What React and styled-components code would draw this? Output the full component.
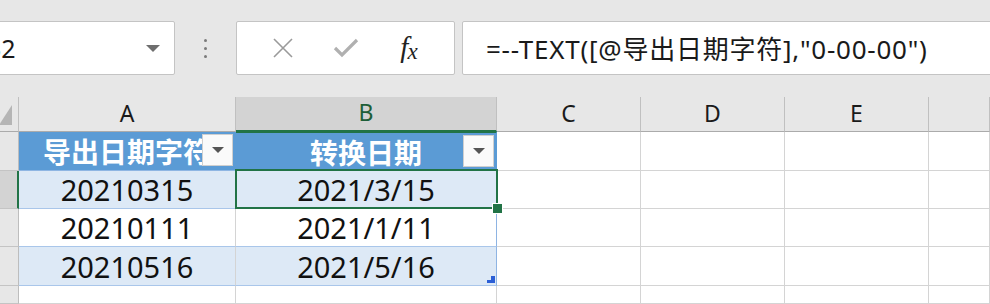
import React from 'react';
import styled, { createGlobalStyle, css } from 'styled-components';

const GREEN = '#217346';
const FONT = `"Noto Sans", "Noto Sans CJK SC", sans-serif`;

const Global = createGlobalStyle`
  html, body {
    margin: 0;
    padding: 0;
    background: #e7e7e7;
  }
  body {
    width: 990px;
    height: 304px;
    overflow: hidden;
    font-family: ${FONT};
  }
`;

const Page = styled.div`
  width: 990px;
  height: 304px;
  overflow: hidden;
  background: #e7e7e7;
  display: flex;
  flex-direction: column;
`;

const Toolbar = styled.div`
  height: 97px;
  box-sizing: border-box;
  padding-top: 21px;
  display: flex;
  align-items: flex-start;
`;

const Field = styled.div`
  height: 54px;
  box-sizing: border-box;
  background: #ffffff;
  border: 1px solid #c4c4c4;
  border-radius: 2px;
  display: flex;
  align-items: center;
`;

const NameBox = styled(Field)`
  margin-left: -25px;
  width: 200px;
  padding-left: 9px;
  padding-right: 14px;
  font-size: 25px;
  color: #1a1a1a;
  justify-content: space-between;
`;

const Caret = styled.span`
  width: 0;
  height: 0;
  border-left: 7px solid transparent;
  border-right: 7px solid transparent;
  border-top: 7px solid #6e6e6e;
`;

const Grip = styled.div`
  width: 61px;
  height: 54px;
  display: flex;
  flex-direction: column;
  align-items: center;
  justify-content: center;
  gap: 5px;
  span {
    width: 3px;
    height: 3px;
    border-radius: 50%;
    background: #7a7a7a;
  }
`;

const ButtonGroup = styled(Field)`
  width: 219px;
  justify-content: space-around;
  padding: 0 14px;
`;

const IconButton = styled.span`
  width: 40px;
  height: 40px;
  display: flex;
  align-items: center;
  justify-content: center;
`;

const Fx = styled.span`
  font-family: "Liberation Serif", "DejaVu Serif", serif;
  font-style: italic;
  color: #222;
  font-size: 29px;
  line-height: 1;
  letter-spacing: -1px;
  sub {
    font-size: 23px;
    vertical-align: -2px;
  }
`;

const FormulaInput = styled(Field)`
  margin-left: 7px;
  flex: 1;
  margin-right: -10px;
  padding-left: 23px;
  font-size: 26px;
  letter-spacing: 0.75px;
  color: #1a1a1a;
  white-space: nowrap;
`;

const Sheet = styled.div`
  flex: 1;
  display: grid;
  grid-template-columns: 19px 217px 261px 144px 144px 144px 1fr;
  grid-template-rows: 35px 39px 38px 38px 39px 1fr;
  background: #ffffff;
`;

const Cell = styled.div`
  position: relative;
  box-sizing: border-box;
  border-right: 1px solid #d4d4d4;
  border-bottom: 1px solid #d4d4d4;
  display: flex;
  align-items: center;
  justify-content: center;
  font-size: 29px;
  color: #111;
  white-space: nowrap;
  ${p => p.$band && css`
    background: #dde9f6;
  `}
  ${p => p.$tableRow && css`
    border-bottom-color: #a9c6ea;
  `}
  ${p => p.$tableEdge && css`
    border-right-color: #8eb4e3;
  `}
  ${p => p.$active && css`
    z-index: 2;
  `}
`;

const ColHead = styled.div`
  box-sizing: border-box;
  background: ${p => (p.$active ? '#d3d3d3' : '#e7e7e7')};
  border-right: 1px solid #c0c0c0;
  border-bottom: ${p => (p.$active ? `2px solid ${GREEN}` : '1px solid #ababab')};
  color: ${p => (p.$active ? '#1d5e37' : '#1a1a1a')};
  font-size: 23px;
  display: flex;
  align-items: flex-end;
  justify-content: center;
  padding-bottom: 2px;
`;

const Corner = styled.div`
  box-sizing: border-box;
  background: #e7e7e7;
  border-right: 1px solid #c0c0c0;
  border-bottom: 1px solid #ababab;
  display: flex;
  align-items: flex-end;
  justify-content: flex-end;
  padding: 0 6px 6px 0;
`;

const CornerMark = styled.span`
  width: 0;
  height: 0;
  border-left: 13px solid transparent;
  border-bottom: 20px solid #b5b5b5;
  margin-left: -13px;
`;

const RowHead = styled.div`
  box-sizing: border-box;
  background: ${p => (p.$active ? '#d3d3d3' : '#e7e7e7')};
  border-right: ${p => (p.$active ? `2px solid ${GREEN}` : '1px solid #bdbdbd')};
  border-bottom: 1px solid #c4c4c4;
`;

const HeaderCell = styled.div`
  position: relative;
  box-sizing: border-box;
  background: #5b9bd5;
  border-right: 1px solid #5b9bd5;
  border-bottom: 1px solid #8fb6e3;
  color: #ffffff;
  font-family: "Noto Sans CJK SC", sans-serif;
  font-weight: 700;
  font-size: 28px;
  display: flex;
  align-items: center;
  justify-content: center;
  white-space: nowrap;
  overflow: hidden;
  ${p => p.$active && css`
    border-top: 2px solid ${GREEN};
    margin-top: -1px;
  `}
`;

const FilterButton = styled.span`
  position: absolute;
  top: 2px;
  right: 2px;
  width: 31px;
  height: 32px;
  box-sizing: border-box;
  background: #fafafa;
  border: 1px solid #cfcfcf;
  display: flex;
  align-items: center;
  justify-content: center;
  &::after {
    content: '';
    border-left: 6px solid transparent;
    border-right: 6px solid transparent;
    border-top: 6px solid #555;
  }
`;

const Selection = styled.span`
  position: absolute;
  top: -2px;
  left: -1px;
  right: -2px;
  bottom: -1px;
  border: 2px solid ${GREEN};
  pointer-events: none;
`;

const FillHandle = styled.span`
  position: absolute;
  right: -7px;
  bottom: -6px;
  width: 11px;
  height: 11px;
  box-sizing: border-box;
  background: ${GREEN};
  border: 1px solid #ffffff;
  z-index: 3;
`;

const ResizeMark = styled.svg`
  position: absolute;
  right: 1px;
  bottom: 2px;
`;

const rows = [
  { raw: '20210315', date: '2021/3/15', band: true, active: true },
  { raw: '20210111', date: '2021/1/11', band: false },
  { raw: '20210516', date: '2021/5/16', band: true, last: true },
];

function EmptyCells({ count }) {
  return Array.from({ length: count }, (_, i) => <Cell key={i} />);
}

export default function App() {
  return (
    <Page>
      <Global />
      <Toolbar>
        <NameBox>
          <span>B2</span>
          <Caret />
        </NameBox>
        <Grip>
          <span />
          <span />
          <span />
        </Grip>
        <ButtonGroup>
          <IconButton>
            <svg width="22" height="22" viewBox="0 0 22 22">
              <path d="M2 2 L20 20 M20 2 L2 20" stroke="#9a9a9a" strokeWidth="1.6" fill="none" />
            </svg>
          </IconButton>
          <IconButton>
            <svg width="26" height="22" viewBox="0 0 26 22">
              <path d="M2 11 L9 18 L24 3" stroke="#b0b0b0" strokeWidth="3.2" fill="none" />
            </svg>
          </IconButton>
          <IconButton>
            <Fx>f<sub>x</sub></Fx>
          </IconButton>
        </ButtonGroup>
        <FormulaInput>=--TEXT([@导出日期字符],"0-00-00")</FormulaInput>
      </Toolbar>

      <Sheet>
        <Corner>
          <CornerMark />
        </Corner>
        <ColHead>A</ColHead>
        <ColHead $active>B</ColHead>
        <ColHead>C</ColHead>
        <ColHead>D</ColHead>
        <ColHead>E</ColHead>
        <ColHead />

        <RowHead />
        <HeaderCell>
          导出日期字符
          <FilterButton />
        </HeaderCell>
        <HeaderCell $active>
          转换日期
          <FilterButton />
        </HeaderCell>
        <EmptyCells count={4} />

        {rows.map(r => (
          <React.Fragment key={r.raw}>
            <RowHead $active={r.active} />
            <Cell $band={r.band} $tableRow>{r.raw}</Cell>
            <Cell $band={r.band} $tableRow $tableEdge $active={r.active}>
              {r.date}
              {r.active && <Selection />}
              {r.active && <FillHandle />}
              {r.last && (
                <ResizeMark width="8" height="7" viewBox="0 0 8 7">
                  <path d="M8 0 V7 H0 V4 H4 V0 Z" fill="#2c5fd6" />
                </ResizeMark>
              )}
            </Cell>
            <EmptyCells count={4} />
          </React.Fragment>
        ))}

        <RowHead />
        <EmptyCells count={6} />
      </Sheet>
    </Page>
  );
}
